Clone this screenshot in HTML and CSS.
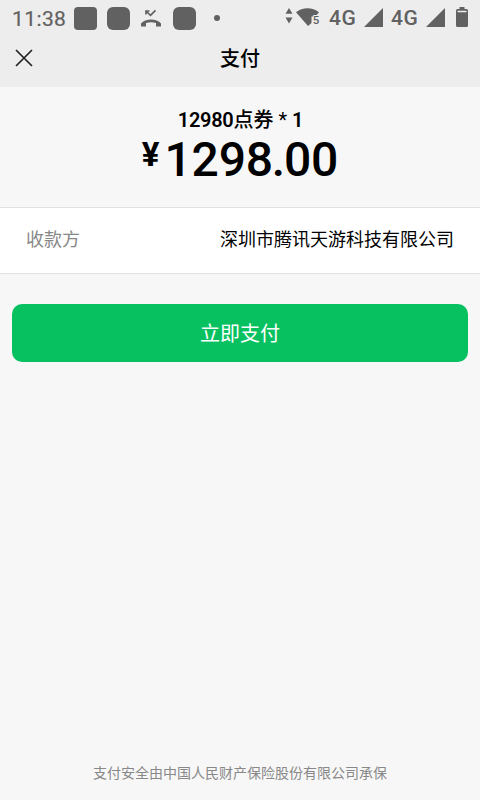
FILE: index.html
```html
<!DOCTYPE html>
<html lang="zh-CN">
<head>
<meta charset="utf-8">
<meta name="viewport" content="width=device-width, initial-scale=1">
<title>支付</title>
<link rel="stylesheet" href="styles.css">
</head>
<body>
<div class="status">
  <span class="clock">11:38</span>
  <i class="app-square first"></i>
  <i class="app-square"></i>
  <svg class="missed" width="22" height="20" viewBox="0 0 22 20"><path d="M1 17.5V14.5C5 9.2 17 9.2 21 14.5V17.5H16V14Q11 12.5 6 14V17.5Z" fill="#616161"/><path d="M6 5.5V2H9.5M6 2L10.5 6.3L15.5 1.3" fill="none" stroke="#616161" stroke-width="1.7"/></svg>
  <i class="app-square last"></i>
  <i class="dot"></i>
  <div class="signals">
    <svg class="traffic" width="8" height="18" viewBox="0 0 8 18"><path d="M4 1L7.5 6.7H.5ZM4 16.5L.5 10.5H7.5Z" fill="#616161"/></svg>
    <svg class="wifi" width="24" height="20" viewBox="0 0 24 20"><path d="M0 4.3C6.5-1 16.5-1 23 4.3L19.5 8.5H15.5V15L12 18Z" fill="#616161"/><text x="16.7" y="15.8">5</text></svg>
    <span class="network">4G</span>
    <svg class="cell" width="20" height="20" viewBox="0 0 20 20"><path d="M1 19L20 0V19Z" fill="#616161"/></svg>
    <span class="network second">4G</span>
    <svg class="cell" width="20" height="20" viewBox="0 0 20 20"><path d="M1 19L20 0V19Z" fill="#616161"/></svg>
    <svg class="battery" width="12" height="20" viewBox="0 0 12 20"><path d="M3.5 0H8.5V2H10.5Q12 2 12 3.5V18.5Q12 20 10.5 20H1.5Q0 20 0 18.5V3.5Q0 2 1.5 2H3.5Z" fill="#616161"/><path d="M1.5 4.5H10.5" stroke="#ededed" stroke-width="1.5"/></svg>
  </div>
</div>
<header class="nav">
  <svg class="close" width="18" height="18" viewBox="0 0 18 18"><path d="M1 1L17 17M17 1L1 17" stroke="#222" stroke-width="1.7"/></svg>
  <h1>支付</h1>
</header>
<main>
  <section class="summary">
    <div class="product"><span class="digits">12980</span>点券 <span class="times">*</span> <span class="digits">1</span></div>
    <div class="price"><span class="yen">¥</span><span class="amount">1298<span class="point">.</span>00</span></div>
  </section>
  <section class="payee">
    <span class="label">收款方</span>
    <span>深圳市腾讯天游科技有限公司</span>
  </section>
  <button class="pay">立即支付</button>
</main>
<footer>支付安全由中国人民财产保险股份有限公司承保</footer>
</body>
</html>
```
FILE: styles.css
```css
* { box-sizing: border-box; }
body {
  margin: 0;
  height: 800px;
  display: flex;
  flex-direction: column;
  overflow: hidden;
  background: #f7f7f7;
  color: #000;
  font-family: Roboto, "Noto Sans CJK SC", sans-serif;
}
svg, i { display: block; flex: none; }
.status {
  height: 36px;
  display: flex;
  align-items: center;
  padding-left: 12px;
  background: #ededed;
  color: #616161;
}
.clock { width: 62px; font-size: 21px; letter-spacing: .4px; line-height: 36px; padding-top: 1px; -webkit-text-stroke: .2px #616161; }
.app-square { width: 23px; height: 23px; border-radius: 6px; background: #616161; }
.first { margin-right: 10px; border-radius: 4px; }
.missed { margin-left: 10px; margin-top: 1px; }
.last { margin-left: 11px; }
.dot { width: 6px; height: 6px; margin-left: 18px; border-radius: 50%; background: #616161; }
.signals { display: flex; align-items: center; margin: 0 12px 0 auto; height: 36px; }
.traffic { margin-top: -4px; margin-right: 3px; }
.wifi { margin-right: 9px; }
.wifi text { font: 500 11.5px Roboto, sans-serif; fill: #616161; stroke: #ededed; stroke-width: 2px; paint-order: stroke; }
.network { width: 34px; font-size: 21px; letter-spacing: .6px; font-weight: 500; line-height: 34px; margin-top: -1px; }
.second { margin-left: 8px; }
.cell { margin-top: 0; }
.battery { margin-left: 11px; margin-top: -2px; }
.nav {
  height: 51px;
  display: grid;
  grid-template-columns: 48px 1fr 48px;
  align-items: start;
  background: #ededed;
}
.close { margin: 13px 0 0 15px; }
h1 { margin: 8px 0 0; text-align: center; font-size: 20px; line-height: 30px; font-weight: 500; }
.summary { height: 120px; padding-top: 18px; text-align: center; }
.product { font-size: 20px; line-height: 30px; font-weight: 500; padding-left: 1px; }
.digits { font-weight: 600; letter-spacing: -.3px; }
.times { font-weight: 400; }
.price { display: flex; justify-content: center; font-weight: 500; }
.yen { font: 700 33px/40px Roboto, sans-serif; margin-right: 5px; }
.amount { font-size: 48px; line-height: 49px; letter-spacing: -.2px; }
.point { margin: 0 -1px; }
.payee {
  height: 67px;
  display: flex;
  justify-content: space-between;
  padding: 18px 26px 0;
  border-top: 1px solid #e2e2e2;
  border-bottom: 1px solid #e2e2e2;
  background: #fff;
  font-size: 18px;
  line-height: 27px;
}
.label { color: #888; }
.pay {
  display: block;
  width: 456px;
  height: 58px;
  margin: 30px 12px 0;
  padding: 2px 0 0;
  border: 0;
  border-radius: 10px;
  background: #07c160;
  color: #fff;
  font: 400 20px/56px Roboto, "Noto Sans CJK SC", sans-serif;
}
footer { margin-top: auto; height: 37px; text-align: center; font-size: 14px; line-height: 21px; color: #888; }
```
